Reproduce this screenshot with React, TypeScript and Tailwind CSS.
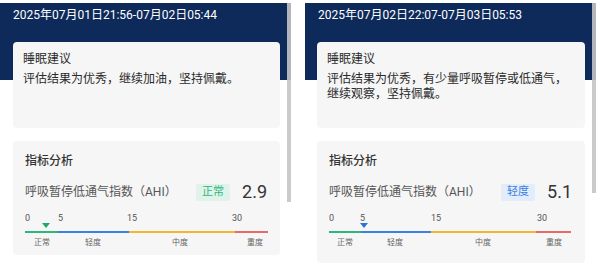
import React from 'react';

interface ScaleConfig {
  numbers: { text: string; left: number }[];
  segments: { color: string; width: number }[];
  labels: { text: string; center: number }[];
  marker: number;
  markerColor: string;
}

interface PanelProps {
  date: string;
  advice: string;
  status: string;
  statusClass: string;
  value: string;
  scale: ScaleConfig;
  offsetClass: string;
  cardHeightClass: string;
  scrollbarHeightClass: string;
}

const Triangle: React.FC<{ color: string; left: number }> = ({ color, left }) => (
  <svg
    className="absolute top-[11px]"
    style={{ left: left - 4 }}
    width="8"
    height="5"
    viewBox="0 0 8 5"
  >
    <polygon points="0,0 8,0 4,5" fill={color} />
  </svg>
);

const Scale: React.FC<{ scale: ScaleConfig }> = ({ scale }) => (
  <div className="relative h-[36px]">
    {scale.numbers.map((n) => (
      <span
        key={n.text}
        className="absolute top-0 text-[9px] leading-[12px] text-[#555]"
        style={{ left: n.left }}
      >
        {n.text}
      </span>
    ))}
    <Triangle color={scale.markerColor} left={scale.marker} />
    <div className="absolute left-0 top-[19px] flex h-[2px]">
      {scale.segments.map((s, i) => (
        <div key={i} className="h-full" style={{ width: s.width, backgroundColor: s.color }} />
      ))}
    </div>
    {scale.labels.map((l) => (
      <span
        key={l.text}
        className="absolute top-[25px] w-[30px] -translate-x-1/2 text-center text-[8px] leading-[11px] text-[#666]"
        style={{ left: l.center }}
      >
        {l.text}
      </span>
    ))}
  </div>
);

const Panel: React.FC<PanelProps> = ({
  date,
  advice,
  status,
  statusClass,
  value,
  scale,
  offsetClass,
  cardHeightClass,
  scrollbarHeightClass,
}) => (
  <div className="relative flex w-[291px] flex-col bg-white pt-[3px]">
    <div className="h-[77px] bg-[#0e2a5a] px-[13px] pt-[5px] text-[12px] leading-[14px] text-white">
      {date}
    </div>
    <div className={`-mt-[38px] mr-[11px] flex flex-col gap-[13px] ${offsetClass}`}>
      <div className="h-[86px] rounded-[4px] bg-[#f6f6f6] px-[10px] pt-[10px] text-[#2a2a2a]">
        <div className="text-[12px] leading-[15px]">睡眠建议</div>
        <div className="mt-[5px] text-[12px] leading-[15px]">{advice}</div>
      </div>
      <div className={`rounded-[4px] bg-[#f6f6f6] pl-[12px] pr-[13px] pt-[11px] ${cardHeightClass}`}>
        <div className="text-[12px] font-medium leading-[18px] text-[#333]">指标分析</div>
        <div className="mt-[13px] flex h-[18px] items-center">
          <span className="flex-1 text-[12px] text-[#555]">呼吸暂停低通气指数（AHI）</span>
          <span className={`flex h-[17px] items-center rounded-[2px] px-[6px] text-[11px] ${statusClass}`}>
            {status}
          </span>
          <span className="ml-[12px] text-[18px] leading-[18px] text-[#333]">{value}</span>
        </div>
        <div className="mt-[11px]">
          <Scale scale={scale} />
        </div>
      </div>
    </div>
    <div className={`absolute right-0 top-[3px] w-[4px] bg-[#c4c4c4] opacity-90 ${scrollbarHeightClass}`} />
  </div>
);

const leftScale: ScaleConfig = {
  numbers: [
    { text: '0', left: 0 },
    { text: '5', left: 33 },
    { text: '15', left: 102 },
    { text: '30', left: 207 },
  ],
  segments: [
    { color: '#2fb67a', width: 33 },
    { color: '#3b82e0', width: 71 },
    { color: '#f2b632', width: 106 },
    { color: '#e86a6a', width: 33 },
  ],
  labels: [
    { text: '正常', center: 17 },
    { text: '轻度', center: 68 },
    { text: '中度', center: 155 },
    { text: '重度', center: 230 },
  ],
  marker: 21,
  markerColor: '#1faa6c',
};

const rightScale: ScaleConfig = {
  numbers: [
    { text: '0', left: 0 },
    { text: '5', left: 31 },
    { text: '15', left: 102 },
    { text: '30', left: 208 },
  ],
  segments: [
    { color: '#2fb67a', width: 32 },
    { color: '#3b82e0', width: 70 },
    { color: '#f2b632', width: 105 },
    { color: '#e86a6a', width: 35 },
  ],
  labels: [
    { text: '正常', center: 16 },
    { text: '轻度', center: 66 },
    { text: '中度', center: 154 },
    { text: '重度', center: 225 },
  ],
  marker: 35,
  markerColor: '#2f6fd6',
};

const App: React.FC = () => {
  return (
    <div
      className="flex h-[273px] w-[600px] overflow-hidden bg-white"
      style={{ fontFamily: 'Roboto, "Noto Sans CJK SC", sans-serif' }}
    >
      <div className="w-[292px]">
        <Panel
          date="2025年07月01日21:56-07月02日05:44"
          advice="评估结果为优秀，继续加油，坚持佩戴。"
          status="正常"
          statusClass="bg-[#dff3ea] text-[#2fb67a]"
          value="2.9"
          scale={leftScale}
          offsetClass="ml-[13px]"
          cardHeightClass="h-[114px]"
          scrollbarHeightClass="h-[199px]"
        />
      </div>
      <div className="ml-[13px] w-[291px]">
        <Panel
          date="2025年07月02日22:07-07月03日05:53"
          advice="评估结果为优秀，有少量呼吸暂停或低通气，继续观察，坚持佩戴。"
          status="轻度"
          statusClass="bg-[#e2ecfb] text-[#3b7fe0]"
          value="5.1"
          scale={rightScale}
          offsetClass="ml-[12px]"
          cardHeightClass="h-[122px]"
          scrollbarHeightClass="h-[190px]"
        />
      </div>
    </div>
  );
};

export default App;
